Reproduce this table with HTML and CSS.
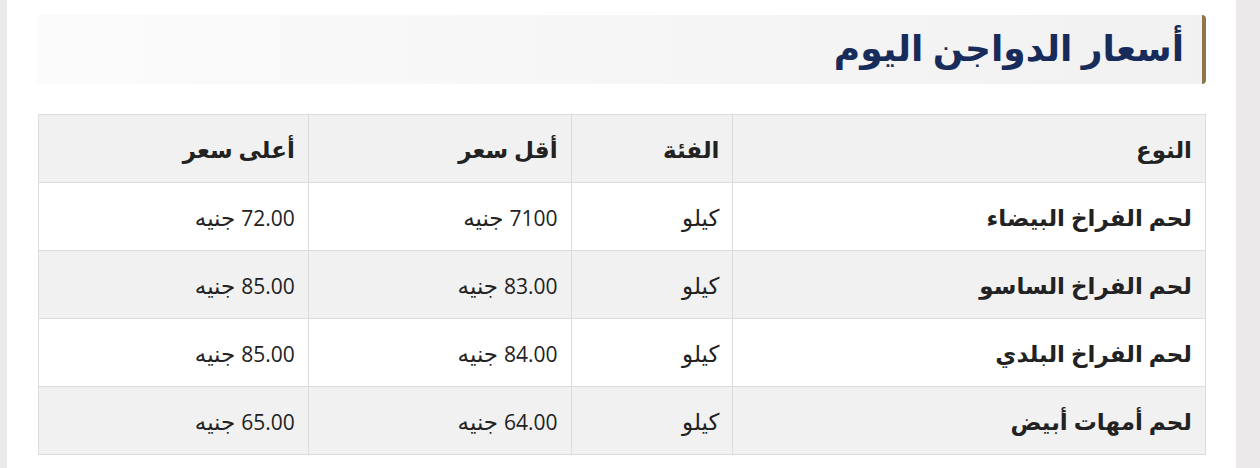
FILE: index.html
```html
<!DOCTYPE html>
<html lang="ar" dir="rtl">
<head>
<meta charset="utf-8">
<title>أسعار الدواجن اليوم</title>
<link rel="stylesheet" href="styles.css">
</head>
<body>
<div class="page">
  <main class="content">
    <h2 class="section-title">أسعار الدواجن اليوم</h2>
    <table class="prices">
      <thead>
        <tr>
          <th class="c-type">النوع</th>
          <th class="c-unit">الفئة</th>
          <th class="c-min">أقل سعر</th>
          <th class="c-max">أعلى سعر</th>
        </tr>
      </thead>
      <tbody>
        <tr>
          <th>لحم الفراخ البيضاء</th>
          <td>كيلو</td>
          <td><span class="num">7100</span> جنيه</td>
          <td><span class="num">72.00</span> جنيه</td>
        </tr>
        <tr>
          <th>لحم الفراخ الساسو</th>
          <td>كيلو</td>
          <td><span class="num">83.00</span> جنيه</td>
          <td><span class="num">85.00</span> جنيه</td>
        </tr>
        <tr>
          <th>لحم الفراخ البلدي</th>
          <td>كيلو</td>
          <td><span class="num">84.00</span> جنيه</td>
          <td><span class="num">85.00</span> جنيه</td>
        </tr>
        <tr>
          <th>لحم أمهات أبيض</th>
          <td>كيلو</td>
          <td><span class="num">64.00</span> جنيه</td>
          <td><span class="num">65.00</span> جنيه</td>
        </tr>
      </tbody>
    </table>
  </main>
</div>
</body>
</html>
```

FILE: styles.css
```css
html, body {
  margin: 0;
  padding: 0;
}
body {
  background: #ebe9e9;
  font-family: "Open Sans", "DejaVu Sans", sans-serif;
  color: #222;
  height: 468px;
  overflow: hidden;
}
.page {
  display: flex;
  direction: ltr;
}
.content {
  direction: rtl;
  margin-left: 7px;
  width: 1229px;
  height: 468px;
  background: #fff;
  box-sizing: border-box;
  padding: 15px 30px 0 30px;
}
.section-title {
  margin: 0;
  height: 69px;
  box-sizing: border-box;
  display: flex;
  align-items: center;
  padding: 0 18px 4px 0;
  background: linear-gradient(to left, #f1f1f1, #fbfbfb);
  border-right: 4px solid #8b7748;
  border-radius: 4px;
  color: #172c5a;
  font-size: 36px;
  font-weight: bold;
}
.prices {
  margin-top: 30px;
  width: 1168px;
  border-collapse: collapse;
  font-size: 23px;
}
.prices th, .prices td {
  border: 1px solid #dcdcdc;
  height: 68px;
  padding: 0 13px;
  text-align: right;
  box-sizing: border-box;
}
.prices th {
  font-weight: bold;
  color: #222;
}
.prices td {
  font-weight: normal;
  color: #222;
}
.num {
  font-size: 21px;
}
.prices thead tr, .prices tbody tr:nth-child(even) {
  background: #f1f1f1;
}
.c-type { width: 473px; }
.c-unit { width: 162px; }
.c-min { width: 263px; }
.c-max { width: 270px; }
```
